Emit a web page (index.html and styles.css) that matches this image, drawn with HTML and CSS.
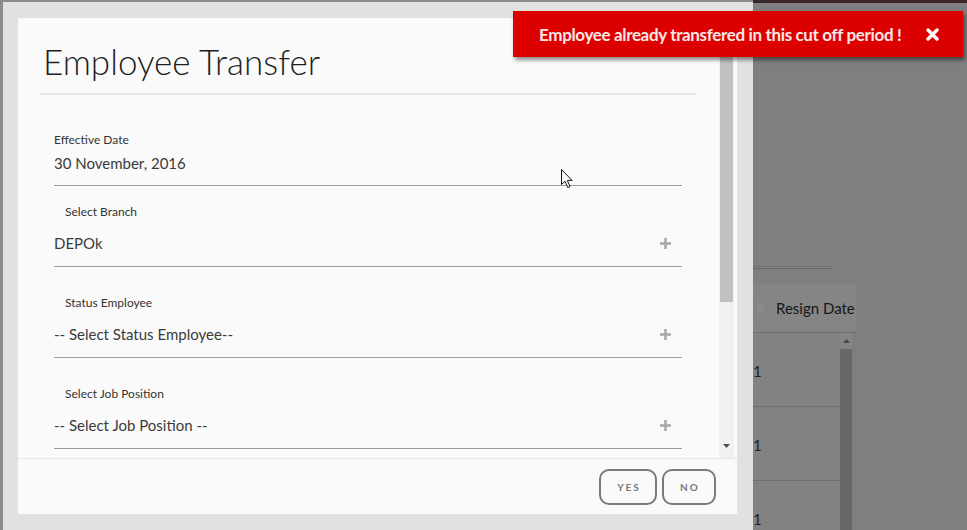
FILE: index.html
```html
<!DOCTYPE html>
<html lang="en">
<head>
<meta charset="utf-8">
<title>Employee Transfer</title>
<link rel="stylesheet" href="styles.css">
</head>
<body>
<div class="screen">
  <div class="frame">
    <div class="modal">
      <div class="modal-body">
        <div class="content">
          <div class="modal-header">
            <h2 class="modal-title">Employee Transfer</h2>
          </div>
          <div class="fields">
            <div class="field field-first">
              <div class="field-label">Effective Date</div>
              <div class="field-value"><span>30 November, 2016</span></div>
            </div>
            <div class="field field-second">
              <div class="field-label indent">Select Branch</div>
              <div class="field-value"><span>DEPOk</span>
                <svg class="plus" viewBox="0 0 11 11" width="11" height="11"><rect x="4.2" y="0" width="2.6" height="11" fill="#aaaaaa"/><rect x="0" y="4.2" width="11" height="2.6" fill="#aaaaaa"/></svg>
              </div>
            </div>
            <div class="field">
              <div class="field-label indent">Status Employee</div>
              <div class="field-value"><span>-- Select Status Employee--</span>
                <svg class="plus" viewBox="0 0 11 11" width="11" height="11"><rect x="4.2" y="0" width="2.6" height="11" fill="#aaaaaa"/><rect x="0" y="4.2" width="11" height="2.6" fill="#aaaaaa"/></svg>
              </div>
            </div>
            <div class="field">
              <div class="field-label indent">Select Job Position</div>
              <div class="field-value"><span>-- Select Job Position --</span>
                <svg class="plus" viewBox="0 0 11 11" width="11" height="11"><rect x="4.2" y="0" width="2.6" height="11" fill="#aaaaaa"/><rect x="0" y="4.2" width="11" height="2.6" fill="#aaaaaa"/></svg>
              </div>
            </div>
          </div>
        </div>
        <div class="vscroll">
          <div class="vs-arrow vs-up"><svg width="7" height="4" viewBox="0 0 7 4"><path d="M0 4 L3.5 0 L7 4 Z" fill="#505050"/></svg></div>
          <div class="vs-thumb"></div>
          <div class="vs-track"></div>
          <div class="vs-arrow vs-down"><svg width="7" height="4" viewBox="0 0 7 4"><path d="M0 0 L3.5 4 L7 0 Z" fill="#505050"/></svg></div>
        </div>
      </div>
      <div class="modal-footer">
        <button class="btn btn-yes">YES</button>
        <button class="btn btn-no">NO</button>
      </div>
    </div>
  </div>
  <div class="backdrop">
    <div class="bg-rule"></div>
    <div class="bg-table">
      <div class="bg-head"><span class="bg-sort"></span><span class="bg-head-text">Resign Date</span></div>
      <div class="bg-body">
        <div class="bg-cells">
          <div class="bg-cell">1</div>
          <div class="bg-cell">1</div>
          <div class="bg-cell">1</div>
        </div>
        <div class="bg-scroll">
          <div class="bg-scroll-arrow"><svg width="7" height="4" viewBox="0 0 7 4"><path d="M0 4 L3.5 0 L7 4 Z" fill="#4a4a4a"/></svg></div>
          <div class="bg-scroll-thumb"></div>
        </div>
      </div>
    </div>
  </div>

  <div class="toast">
    <span class="toast-text">Employee already transfered in this cut off period !</span>
    <svg class="toast-close" width="13" height="13" viewBox="0 0 13 13"><path d="M2 2 L11 11 M11 2 L2 11" stroke="#ffffff" stroke-width="3.4" stroke-linecap="round"/></svg>
  </div>

  <svg class="cursor" width="13" height="20" viewBox="0 0 13 20"><path d="M0.5 0.5 L0.5 15.5 L4 12.2 L6.8 18.6 L9 17.6 L6.3 11.4 L11 11.4 Z" fill="#ffffff" stroke="#111111" stroke-width="1" stroke-linejoin="round"/></svg>
</div>
</body>
</html>
```

FILE: styles.css
```css
* { box-sizing: border-box; }

html, body {
  margin: 0;
  padding: 0;
  width: 967px;
  height: 530px;
  overflow: hidden;
  background: #7f7f7f;
  font-family: Lato, "Open Sans", "Liberation Sans", sans-serif;
}

.screen {
  position: relative;
  width: 967px;
  height: 530px;
  display: flex;
}

/* left light panel holding the modal */
.frame {
  width: 753px;
  height: 530px;
  background: #e1e1e1;
  border-top: 2px solid #8a8a8a;
  border-left: 3px solid #8c8c8c;
  padding: 16px 16px 16px 15px;
}

.modal {
  width: 719px;
  height: 496px;
  background: #fafafa;
  display: flex;
  flex-direction: column;
}

.modal-body {
  height: 440px;
  display: flex;
  padding-right: 3px;
  overflow: hidden;
}

.content {
  flex: 1;
  overflow: hidden;
}

.modal-header {
  margin-left: 22px;
  width: 656px;
  padding: 23px 0 12px 3px;
  border-bottom: 2px solid #e4e4e4;
}

.modal-title {
  margin: 0;
  font-size: 35px;
  line-height: 40px;
  font-weight: 300;
  color: #1e1e1e;
}

.fields {
  margin-left: 36px;
  width: 628px;
}

.field {
  margin-top: 29px;
  padding-bottom: 13px;
  border-bottom: 1px solid #9a9a9a;
  box-shadow: 0 1px 0 #ffffff;
}

.field-first {
  margin-top: 38px;
  padding-bottom: 12px;
}

.field-second {
  margin-top: 19px;
}

.field-label {
  font-size: 12px;
  line-height: 14px;
  color: #333333;
}

.field-label.indent {
  padding-left: 11px;
}

.field-value {
  display: flex;
  justify-content: space-between;
  align-items: center;
  margin-top: 14px;
  padding-right: 11px;
  font-size: 15px;
  line-height: 20px;
  color: #3a3a3a;
}

.field-first .field-value {
  margin-top: 6px;
}

.plus {
  display: block;
}

/* modal inner scrollbar */
.vscroll {
  width: 15px;
  display: flex;
  flex-direction: column;
  background: #f1f1f1;
}

.vs-arrow {
  height: 15px;
  display: flex;
  align-items: center;
  justify-content: center;
}

.vs-thumb {
  height: 269px;
  margin: 0 1px 0 1px;
  background: #c1c1c1;
}

.vs-track {
  flex: 1;
}

.vs-down {
  margin-bottom: 5px;
}

.modal-footer {
  flex: 1;
  border-top: 1px solid #e6e6e6;
  display: flex;
  justify-content: flex-end;
  align-items: center;
  gap: 5px;
  padding-right: 21px;
}

.btn {
  height: 36px;
  border: 2px solid #7a7a7a;
  border-radius: 10px;
  background: transparent;
  font-family: Lato, "Liberation Sans", sans-serif;
  font-weight: bold;
  font-size: 10px;
  letter-spacing: 2px;
  color: #777777;
  padding: 0 0 0 2px;
}

.btn-yes { width: 58px; }
.btn-no { width: 54px; }

/* dimmed page behind the modal */
.backdrop {
  flex: 1;
  height: 530px;
  border-top: 3px solid #3a2626;
  overflow: hidden;
}

.bg-rule {
  margin-top: 263px;
  width: 79px;
  height: 3px;
  border-top: 1px solid #727272;
  border-bottom: 1px solid #6a6a6a;
}

.bg-table {
  margin-top: 14px;
  width: 103px;
}

.bg-head {
  height: 50px;
  background: #858585;
  border-bottom: 1px solid #6e6e6e;
  display: flex;
  align-items: center;
}

.bg-sort {
  width: 7px;
  height: 10px;
  margin-left: 4px;
  background: #8a8a8a;
}

.bg-head-text {
  margin-left: 12px;
  font-size: 15px;
  color: #161616;
  white-space: nowrap;
}

.bg-body {
  display: flex;
  width: 99px;
}

.bg-cells {
  width: 87px;
}

.bg-cell {
  height: 74px;
  background: #828282;
  border-bottom: 1px solid #6e6e6e;
  display: flex;
  align-items: center;
  padding-top: 2px;
  font-size: 15px;
  color: #222222;
}

.bg-scroll {
  width: 12px;
  height: 200px;
  display: flex;
  flex-direction: column;
}

.bg-scroll-arrow {
  height: 16px;
  background: #858585;
  display: flex;
  justify-content: center;
  align-items: center;
}

.bg-scroll-thumb {
  flex: 1;
  background: #686868;
}

/* toast notification */
.toast {
  position: absolute;
  left: 513px;
  top: 11px;
  width: 450px;
  height: 46px;
  background: #dd0000;
  box-shadow: 2px 3px 4px rgba(0, 0, 0, 0.45);
  display: flex;
  align-items: center;
  padding-left: 26px;
}

.toast-text {
  font-size: 17px;
  font-weight: bold;
  color: #fbe6e6;
  white-space: nowrap;
  letter-spacing: -0.35px;
}

.toast-close {
  position: absolute;
  left: 413px;
  top: 17px;
}

.cursor {
  position: absolute;
  left: 561px;
  top: 169px;
}
```
